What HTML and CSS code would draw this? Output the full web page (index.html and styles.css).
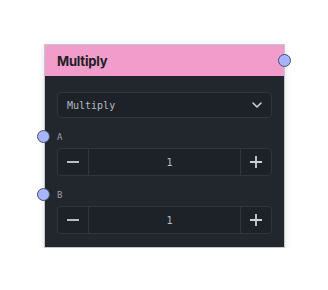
FILE: index.html
```html
<!DOCTYPE html>
<html lang="en">
<head>
    <meta charset="UTF-8">
    <title>Multiply</title>
    <link rel="stylesheet" href="styles.css">
</head>
<body>
<div class="node">
    <div class="head">
        <span class="title">Multiply</span>
        <i class="port port-out"></i>
    </div>
    <div class="body">
        <div class="select">
            <span>Multiply</span>
            <svg width="12" height="12" viewBox="0 0 12 12"><path d="M2 4l4 4 4-4" fill="none" stroke="#c9d1d9" stroke-width="1.6" stroke-linecap="round" stroke-linejoin="round"/></svg>
        </div>
        <div class="field">
            <div class="label"><i class="port port-in"></i>A</div>
            <div class="num">
                <span class="btn"><svg width="12" height="12" viewBox="0 0 12 12"><path d="M0 6h12" stroke="#c9d1d9" stroke-width="1.8"/></svg></span>
                <span class="val">1</span>
                <span class="btn"><svg width="12" height="12" viewBox="0 0 12 12"><path d="M0 6h12M6 0v12" stroke="#c9d1d9" stroke-width="1.8"/></svg></span>
            </div>
        </div>
        <div class="field">
            <div class="label"><i class="port port-in"></i>B</div>
            <div class="num">
                <span class="btn"><svg width="12" height="12" viewBox="0 0 12 12"><path d="M0 6h12" stroke="#c9d1d9" stroke-width="1.8"/></svg></span>
                <span class="val">1</span>
                <span class="btn"><svg width="12" height="12" viewBox="0 0 12 12"><path d="M0 6h12M6 0v12" stroke="#c9d1d9" stroke-width="1.8"/></svg></span>
            </div>
        </div>
    </div>
</div>
</body>
</html>
```

FILE: styles.css
```css
*{
    padding: 0;
    margin: 0;
    box-sizing: border-box;
}
body{
    background: #fff;
    padding: 44px 0 0 44px;
}
.node{
    width: 241px;
    border: 1px solid #c4c7cc;
    background: #22272e;
    box-shadow: 0 2px 6px rgba(0,0,0,.12);
}
.head{
    position: relative;
    height: 31px;
    background: #f19ccb;
    display: flex;
    align-items: center;
    padding-left: 12px;
}
.title{
    font-family: Inter, "Liberation Sans", sans-serif;
    font-weight: 700;
    font-size: 13px;
    letter-spacing: -0.2px;
    color: #1c1f24;
}
.port{
    position: absolute;
    width: 13px;
    height: 13px;
    border-radius: 50%;
    background: #a5b4fc;
    border: 1.5px solid #4b5260;
}
.port-out{
    right: -7px;
    top: 9px;
}
.port-in{
    left: -7px;
    top: 0;
}
.body{
    padding: 16px 12px 13px;
    display: flex;
    flex-direction: column;
    gap: 12px;
}
.select{
    height: 26px;
    border: 1px solid #30363d;
    border-radius: 4px;
    background: #1d2228;
    display: flex;
    align-items: center;
    justify-content: space-between;
    padding: 0 8px 0 9px;
    font-family: "DejaVu Sans Mono", monospace;
    font-size: 10px;
    color: #b4bac2;
}
.field{
    display: flex;
    flex-direction: column;
    gap: 4px;
}
.label{
    position: relative;
    height: 14px;
    line-height: 14px;
    font-family: "DejaVu Sans Mono", monospace;
    font-size: 9px;
    color: #9aa1aa;
}
.label .port{
    left: -20px;
}
.num{
    height: 28px;
    border: 1px solid #30363d;
    border-radius: 4px;
    background: #1d2228;
    display: flex;
    align-items: stretch;
}
.btn{
    width: 31px;
    display: flex;
    align-items: center;
    justify-content: center;
}
.btn:first-child{
    border-right: 1px solid #30363d;
}
.btn:last-child{
    border-left: 1px solid #30363d;
}
.val{
    flex: 1;
    display: flex;
    align-items: center;
    justify-content: center;
    padding-left: 10px;
    font-family: "DejaVu Sans Mono", monospace;
    font-size: 10px;
    color: #b9bfc6;
}
```
